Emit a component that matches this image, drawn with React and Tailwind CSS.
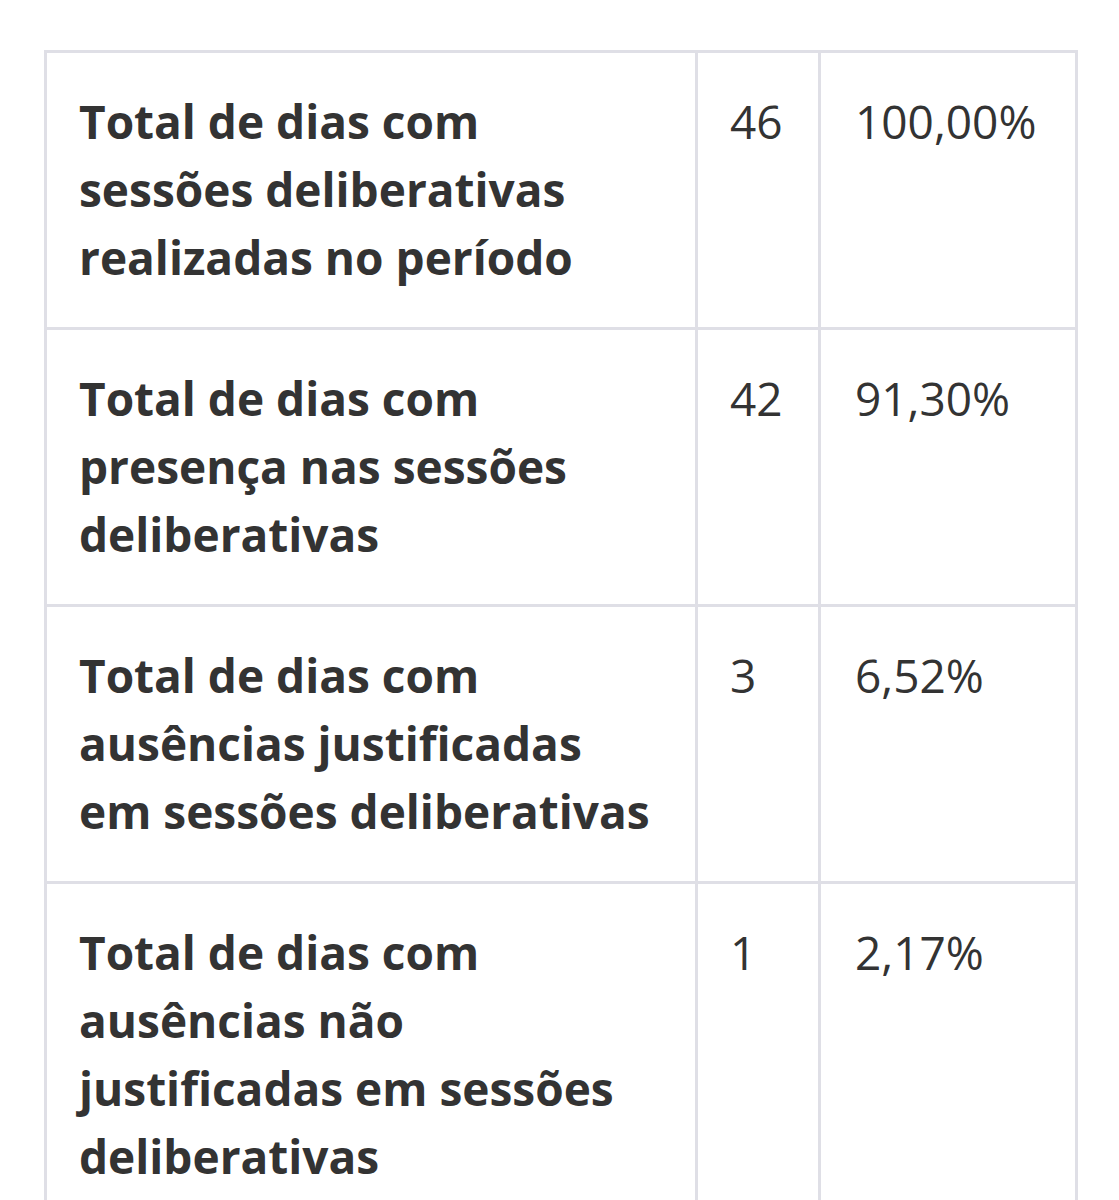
export default function App() {
  const rows = [
    ["Total de dias com sessões deliberativas realizadas no período", "46", "100,00%"],
    ["Total de dias com presença nas sessões deliberativas", "42", "91,30%"],
    ["Total de dias com ausências justificadas em sessões deliberativas", "3", "6,52%"],
    ["Total de dias com ausências não justificadas em sessões deliberativas", "1", "2,17%"],
  ];
  return (
    <div className="bg-white min-h-[1200px] pt-[50px] pl-[44px] text-[#333333]" style={{ fontFamily: '"Open Sans", "Noto Sans", sans-serif' }}>
      <table className="border-collapse w-[1031px] table-fixed">
        <colgroup>
          <col className="w-[651px]" />
          <col className="w-[123px]" />
          <col className="w-[257px]" />
        </colgroup>
        <tbody>
          {rows.map((r, i) => (
            <tr key={i}>
              <td className="border-[3px] border-[#dfdfe6] align-top pl-[32px] pr-[42px] pt-[34px] pb-[36px] text-[46px] leading-[68px] font-bold">
                {r[0]}
              </td>
              <td className="border-[3px] border-[#dfdfe6] align-top pl-[32px] pt-[34px] text-[46px] leading-[68px]">
                {r[1]}
              </td>
              <td className="border-[3px] border-[#dfdfe6] align-top pl-[34px] pt-[34px] text-[46px] leading-[68px]">
                {r[2]}
              </td>
            </tr>
          ))}
        </tbody>
      </table>
    </div>
  );
}
